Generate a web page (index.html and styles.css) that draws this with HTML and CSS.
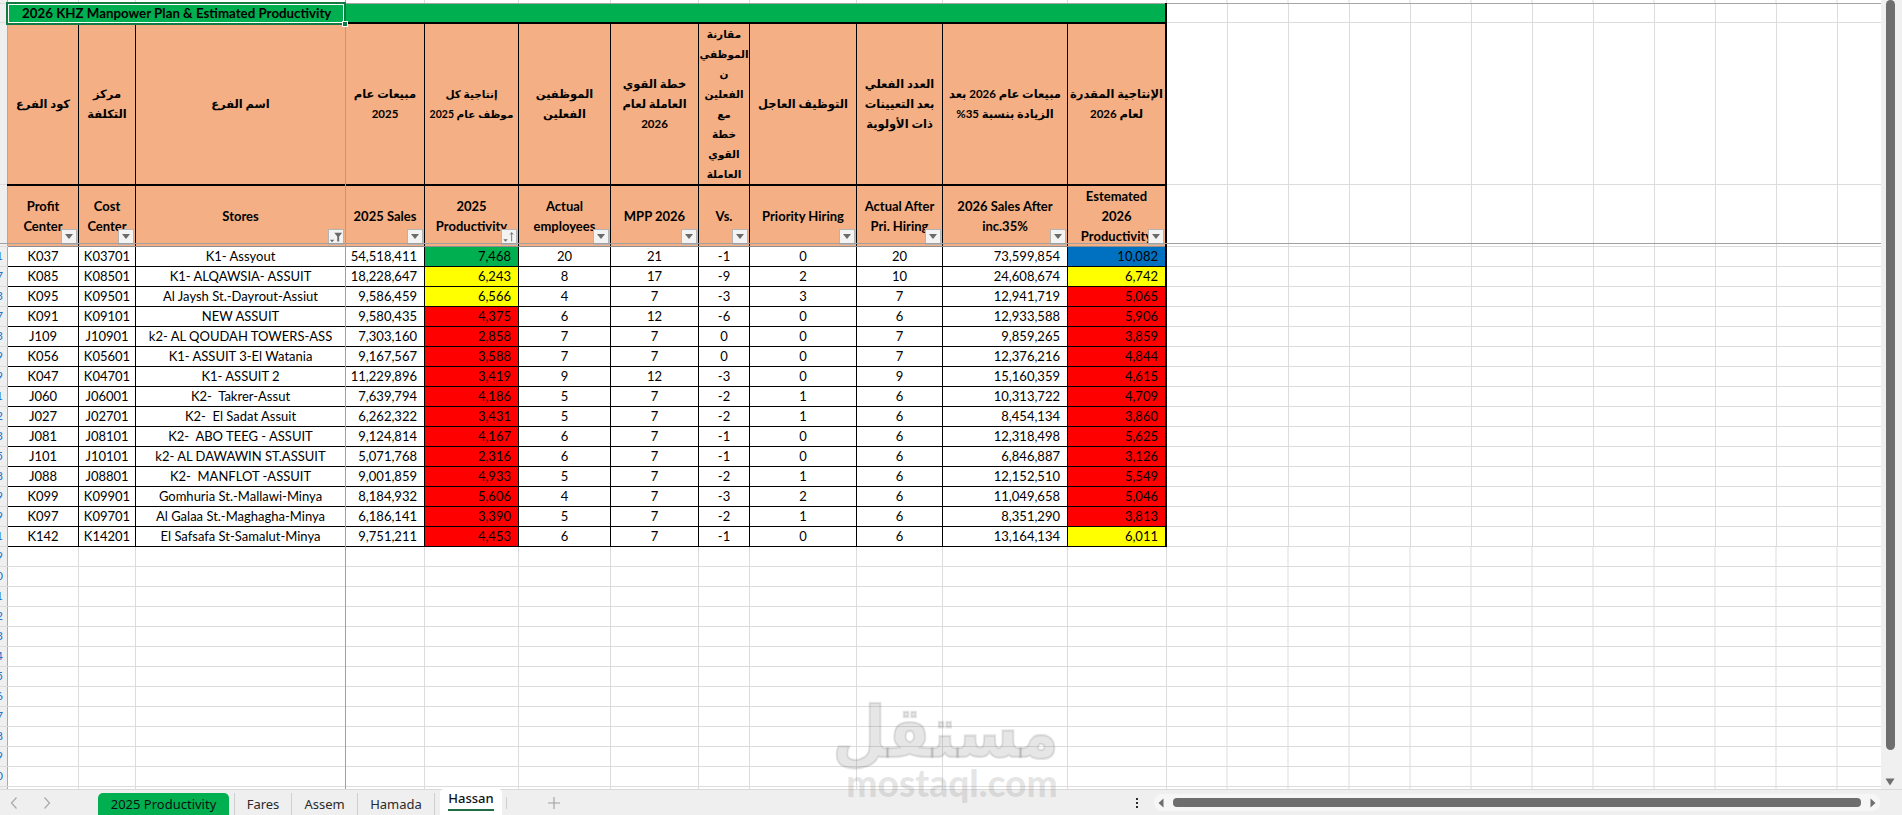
FILE: index.html
```html
<!DOCTYPE html>
<html lang="en">
<head>
<meta charset="utf-8">
<title>2026 KHZ Manpower Plan</title>
<link rel="stylesheet" href="styles.css">
</head>
<body>
<div class="app">
  <div class="work">
    <div class="sheet">
      <table class="grid">
        <colgroup>
          <col class="c0"><col class="c1"><col class="c2"><col class="c3"><col class="c4"><col class="c5"><col class="c6"><col class="c7"><col class="c8"><col class="c9"><col class="c10"><col class="c11"><col class="c12"><col class="c13">
        </colgroup>
        <tbody>
          <tr class="r-top"><th class="rh"></th><td></td><td></td><td></td><td></td><td></td><td></td><td></td><td></td><td></td><td></td><td></td><td></td><td class="rest"></td></tr>
          <tr class="r-title"><th class="rh"></th><th class="title" colspan="3">2026 KHZ Manpower Plan &amp; Estimated Productivity</th><th class="title-fill" colspan="9"></th><td class="rest"></td></tr>
          <tr class="r-ar">
            <th class="rh"></th>
            <th class="ar" dir="rtl">كود الفرع</th>
            <th class="ar" dir="rtl">مركز<br>التكلفة</th>
            <th class="ar" dir="rtl">اسم الفرع</th>
            <th class="ar" dir="rtl">مبيعات عام<br>2025</th>
            <th class="ar tight" dir="rtl">إنتاجية كل<br>موظف عام 2025</th>
            <th class="ar" dir="rtl">الموظفين<br>الفعلين</th>
            <th class="ar" dir="rtl">خطة القوي<br>العاملة لعام<br>2026</th>
            <th class="ar tight" dir="rtl">مقارنة<br>الموظفي<br>ن<br>الفعلين<br>مع<br>خطة<br>القوي<br>العاملة</th>
            <th class="ar" dir="rtl">التوظيف العاجل</th>
            <th class="ar" dir="rtl">العدد الفعلي<br>بعد التعيينات<br>ذات الأولوية</th>
            <th class="ar" dir="rtl">مبيعات عام 2026 بعد<br>الزيادة بنسبة 35%</th>
            <th class="ar end" dir="rtl">الإنتاجية المقدرة<br>لعام 2026</th>
            <td class="rest"></td>
          </tr>
          <tr class="r-en">
            <th class="rh"></th>
            <th class="en">Profit<br>Center<span class="fb"></span></th>
            <th class="en">Cost<br>Center<span class="fb"></span></th>
            <th class="en">Stores<span class="fb fb-icon"><svg viewBox="0 0 16 16" width="14" height="14"><path d="M6 3h9l-3.4 4.4V13H9.4V7.4z" fill="#6a6a6a"/><path d="M1 11h5l-2.5 3z" fill="#6a6a6a"/></svg></span></th>
            <th class="en">2025 Sales<span class="fb"></span></th>
            <th class="en">2025<br>Productivity<span class="fb fb-icon"><svg viewBox="0 0 16 16" width="14" height="14"><path d="M1.500 10.500h5l-2.500 3z" fill="#6a6a6a"/><path d="M11 13V3M9.200 5.200L11 3l1.800 2.200" fill="none" stroke="#6a6a6a" stroke-width="1"/></svg></span></th>
            <th class="en">Actual<br>employees<span class="fb"></span></th>
            <th class="en">MPP 2026<span class="fb"></span></th>
            <th class="en">Vs.<span class="fb"></span></th>
            <th class="en">Priority Hiring<span class="fb"></span></th>
            <th class="en">Actual After<br>Pri. Hiring<span class="fb"></span></th>
            <th class="en">2026 Sales After<br>inc.35%<span class="fb"></span></th>
            <th class="en end">Estemated<br>2026<br>Productivity<span class="fb"></span></th>
            <td class="rest"></td>
          </tr>
          <tr class="d"><th class="rh">61</th><td>K037</td><td>K03701</td><td>K1- Assyout</td><td class="n">54,518,411</td><td class="n green">7,468</td><td>20</td><td>21</td><td>-1</td><td>0</td><td>20</td><td class="n">73,599,854</td><td class="n end blue">10,082</td><td class="rest"></td></tr>
          <tr class="d"><th class="rh">77</th><td>K085</td><td>K08501</td><td>K1- ALQAWSIA- ASSUIT</td><td class="n">18,228,647</td><td class="n yellow">6,243</td><td>8</td><td>17</td><td>-9</td><td>2</td><td>10</td><td class="n">24,608,674</td><td class="n end yellow">6,742</td><td class="rest"></td></tr>
          <tr class="d"><th class="rh">83</th><td>K095</td><td>K09501</td><td>Al Jaysh St.-Dayrout-Assiut</td><td class="n">9,586,459</td><td class="n yellow">6,566</td><td>4</td><td>7</td><td>-3</td><td>3</td><td>7</td><td class="n">12,941,719</td><td class="n end red">5,065</td><td class="rest"></td></tr>
          <tr class="d"><th class="rh">87</th><td>K091</td><td>K09101</td><td>NEW ASSUIT</td><td class="n">9,580,435</td><td class="n red">4,375</td><td>6</td><td>12</td><td>-6</td><td>0</td><td>6</td><td class="n">12,933,588</td><td class="n end red">5,906</td><td class="rest"></td></tr>
          <tr class="d"><th class="rh">93</th><td>J109</td><td>J10901</td><td>k2- AL QOUDAH TOWERS-ASS</td><td class="n">7,303,160</td><td class="n red">2,858</td><td>7</td><td>7</td><td>0</td><td>0</td><td>7</td><td class="n">9,859,265</td><td class="n end red">3,859</td><td class="rest"></td></tr>
          <tr class="d"><th class="rh">99</th><td>K056</td><td>K05601</td><td>K1- ASSUIT 3-El Watania</td><td class="n">9,167,567</td><td class="n red">3,588</td><td>7</td><td>7</td><td>0</td><td>0</td><td>7</td><td class="n">12,376,216</td><td class="n end red">4,844</td><td class="rest"></td></tr>
          <tr class="d"><th class="rh">109</th><td>K047</td><td>K04701</td><td>K1- ASSUIT 2</td><td class="n">11,229,896</td><td class="n red">3,419</td><td>9</td><td>12</td><td>-3</td><td>0</td><td>9</td><td class="n">15,160,359</td><td class="n end red">4,615</td><td class="rest"></td></tr>
          <tr class="d"><th class="rh">111</th><td>J060</td><td>J06001</td><td>K2-&nbsp; Takrer-Assut</td><td class="n">7,639,794</td><td class="n red">4,186</td><td>5</td><td>7</td><td>-2</td><td>1</td><td>6</td><td class="n">10,313,722</td><td class="n end red">4,709</td><td class="rest"></td></tr>
          <tr class="d"><th class="rh">112</th><td>J027</td><td>J02701</td><td>K2-&nbsp; El Sadat Assuit</td><td class="n">6,262,322</td><td class="n red">3,431</td><td>5</td><td>7</td><td>-2</td><td>1</td><td>6</td><td class="n">8,454,134</td><td class="n end red">3,860</td><td class="rest"></td></tr>
          <tr class="d"><th class="rh">113</th><td>J081</td><td>J08101</td><td>K2-&nbsp; ABO TEEG - ASSUIT</td><td class="n">9,124,814</td><td class="n red">4,167</td><td>6</td><td>7</td><td>-1</td><td>0</td><td>6</td><td class="n">12,318,498</td><td class="n end red">5,625</td><td class="rest"></td></tr>
          <tr class="d"><th class="rh">115</th><td>J101</td><td>J10101</td><td>k2- AL DAWAWIN ST.ASSUIT</td><td class="n">5,071,768</td><td class="n red">2,316</td><td>6</td><td>7</td><td>-1</td><td>0</td><td>6</td><td class="n">6,846,887</td><td class="n end red">3,126</td><td class="rest"></td></tr>
          <tr class="d"><th class="rh">118</th><td>J088</td><td>J08801</td><td>K2-&nbsp; MANFLOT -ASSUIT</td><td class="n">9,001,859</td><td class="n red">4,933</td><td>5</td><td>7</td><td>-2</td><td>1</td><td>6</td><td class="n">12,152,510</td><td class="n end red">5,549</td><td class="rest"></td></tr>
          <tr class="d"><th class="rh">119</th><td>K099</td><td>K09901</td><td>Gomhuria St.-Mallawi-Minya</td><td class="n">8,184,932</td><td class="n red">5,606</td><td>4</td><td>7</td><td>-3</td><td>2</td><td>6</td><td class="n">11,049,658</td><td class="n end red">5,046</td><td class="rest"></td></tr>
          <tr class="d"><th class="rh">129</th><td>K097</td><td>K09701</td><td>Al Galaa St.-Maghagha-Minya</td><td class="n">6,186,141</td><td class="n red">3,390</td><td>5</td><td>7</td><td>-2</td><td>1</td><td>6</td><td class="n">8,351,290</td><td class="n end red">3,813</td><td class="rest"></td></tr>
          <tr class="d"><th class="rh">131</th><td>K142</td><td>K14201</td><td>El Safsafa St-Samalut-Minya</td><td class="n">9,751,211</td><td class="n red">4,453</td><td>6</td><td>7</td><td>-1</td><td>0</td><td>6</td><td class="n">13,164,134</td><td class="n end yellow">6,011</td><td class="rest"></td></tr>
          <tr class="e"><th class="rh">139</th><td></td><td></td><td></td><td></td><td></td><td></td><td></td><td></td><td></td><td></td><td></td><td></td><td class="rest"></td></tr>
          <tr class="e"><th class="rh">140</th><td></td><td></td><td></td><td></td><td></td><td></td><td></td><td></td><td></td><td></td><td></td><td></td><td class="rest"></td></tr>
          <tr class="e"><th class="rh">141</th><td></td><td></td><td></td><td></td><td></td><td></td><td></td><td></td><td></td><td></td><td></td><td></td><td class="rest"></td></tr>
          <tr class="e"><th class="rh">142</th><td></td><td></td><td></td><td></td><td></td><td></td><td></td><td></td><td></td><td></td><td></td><td></td><td class="rest"></td></tr>
          <tr class="e"><th class="rh">143</th><td></td><td></td><td></td><td></td><td></td><td></td><td></td><td></td><td></td><td></td><td></td><td></td><td class="rest"></td></tr>
          <tr class="e"><th class="rh">144</th><td></td><td></td><td></td><td></td><td></td><td></td><td></td><td></td><td></td><td></td><td></td><td></td><td class="rest"></td></tr>
          <tr class="e"><th class="rh">145</th><td></td><td></td><td></td><td></td><td></td><td></td><td></td><td></td><td></td><td></td><td></td><td></td><td class="rest"></td></tr>
          <tr class="e"><th class="rh">146</th><td></td><td></td><td></td><td></td><td></td><td></td><td></td><td></td><td></td><td></td><td></td><td></td><td class="rest"></td></tr>
          <tr class="e"><th class="rh">147</th><td></td><td></td><td></td><td></td><td></td><td></td><td></td><td></td><td></td><td></td><td></td><td></td><td class="rest"></td></tr>
          <tr class="e"><th class="rh">148</th><td></td><td></td><td></td><td></td><td></td><td></td><td></td><td></td><td></td><td></td><td></td><td></td><td class="rest"></td></tr>
          <tr class="e"><th class="rh">149</th><td></td><td></td><td></td><td></td><td></td><td></td><td></td><td></td><td></td><td></td><td></td><td></td><td class="rest"></td></tr>
          <tr class="e"><th class="rh">150</th><td></td><td></td><td></td><td></td><td></td><td></td><td></td><td></td><td></td><td></td><td></td><td></td><td class="rest"></td></tr>
          <tr class="e"><th class="rh">151</th><td></td><td></td><td></td><td></td><td></td><td></td><td></td><td></td><td></td><td></td><td></td><td></td><td class="rest"></td></tr>
        </tbody>
      </table>
      <div class="freeze-v"></div>
      <div class="freeze-h"></div>
      <div class="selection"><span class="handle"></span></div>
    </div>
    <div class="vbar">
      <div class="vthumb"></div>
      <svg class="varrow" viewBox="0 0 10 8" width="10" height="8"><path d="M0.500 0.500h9L5 7.500z" fill="#6e6e6e"/></svg>
    </div>
  </div>
  <div class="tabbar">
    <div class="nav">
      <svg viewBox="0 0 8 14" width="8" height="14"><path d="M6.500 1.500L1.500 7l5 5.500" fill="none" stroke="#a8a8a8" stroke-width="1.200"/></svg>
      <svg viewBox="0 0 8 14" width="8" height="14"><path d="M1.500 1.500L6.500 7l-5 5.500" fill="none" stroke="#a8a8a8" stroke-width="1.200"/></svg>
    </div>
    <div class="tab tab-green">2025 Productivity</div>
    <div class="tab tab-fares">Fares</div>
    <div class="tab tab-assem">Assem</div>
    <div class="tab tab-hamada">Hamada</div>
    <div class="tab tab-active"><span class="tab-label">Hassan</span></div>
    <div class="add">
      <svg viewBox="0 0 12 12" width="12" height="12"><path d="M6 0v12M0 6h12" stroke="#a0a0a0" stroke-width="1.100"/></svg>
    </div>
    <div class="dots"><i></i><i></i><i></i></div>
    <div class="hbar">
      <svg viewBox="0 0 6 10" width="6" height="10"><path d="M5.500 0.500v9L0.500 5z" fill="#6e6e6e"/></svg>
      <div class="hthumb"></div>
      <svg viewBox="0 0 6 10" width="6" height="10"><path d="M0.500 0.500v9L5.500 5z" fill="#6e6e6e"/></svg>
    </div>
  </div>
  <div class="watermark">
    <div class="wm-ar" dir="rtl" lang="ar">مستقل</div>
    <div class="wm-en">mostaql.com</div>
  </div>
</div>
</body>
</html>
```

FILE: styles.css
```css
* { box-sizing: border-box; }
html, body { margin: 0; height: 100%; overflow: hidden; background: #fff; }
body { font-family: Lato, "DejaVu Sans", sans-serif; color: #000; }

.app { position: relative; display: flex; flex-direction: column; width: 1902px; height: 815px; overflow: hidden; }
.work { display: flex; height: 789px; }

.sheet { position: relative; width: 1881px; height: 789px; overflow: hidden; background: #fff; }

.grid { border-collapse: collapse; table-layout: fixed; width: 1880.5px; font-size: 13px; line-height: 16px; }
.c0 { width: 7.5px; } .c1 { width: 71px; } .c2 { width: 57px; } .c3 { width: 210px; }
.c4 { width: 79px; } .c5 { width: 94px; } .c6 { width: 92px; } .c7 { width: 88px; }
.c8 { width: 51px; } .c9 { width: 107px; } .c10 { width: 86px; } .c11 { width: 125px; }
.c12 { width: 98.500px; } .c13 { width: 714.500px; }

.grid td, .grid th { padding: 0; border-right: 1px solid #dcdcdc; border-bottom: 1px solid #dcdcdc; text-align: center; white-space: nowrap; overflow: hidden; font-weight: 400; }

.r-top { height: 3px; }
.r-top td, .r-top th { border-bottom-color: #a6a6a6; line-height: 0; font-size: 0; }
.r-title { height: 19.500px; }
.r-ar { height: 160px; }
.r-en { height: 58.500px; }
.d { height: 20px; }
.e { height: 20px; }

.grid .rh { padding-right: 4px; background: #efefef; border-right: 1px solid #ababab; border-bottom-color: #dcdcdc; direction: rtl; text-align: right; color: #2a6fc9; font-size: 12px; }

.rest.rest { background: repeating-linear-gradient(to right, transparent 0, transparent 60px, #dcdcdc 60px, #dcdcdc 61px); }

.grid .title { background: #00b050; font-weight: 700; font-size: 13.300px; border-bottom: 2px solid #000; border-right: 0; }
.grid .title-fill { background: #00b050; border-bottom: 2px solid #000; border-right: 2px solid #000; }

.grid .ar, .grid .en { background: #f4b084; font-weight: 700; line-height: 20px; border-right: 1px solid #000; }
.grid .ar { border-bottom: 2px solid #000; font-size: 11.500px; }
.grid .tight { font-size: 10.500px; }
.grid .en { position: relative; border-bottom: 1px solid #8f8f8f; }

.d td { border-right-color: #000; border-bottom-color: #000; }
.grid td.rest { border-right: 0; }
.d td.rest { border-bottom-color: #dcdcdc; }
.grid .end { border-right: 2px solid #000; }

.grid .n { text-align: right; padding-right: 7px; }
.grid .green { background: #00b050; }
.grid .yellow { background: #ffff00; }
.grid .red { background: #ff0000; }
.grid .blue { background: #0070c0; }

.fb { position: absolute; right: 1px; bottom: 1px; display: flex; align-items: center; justify-content: center; width: 16px; height: 16px; background: #f3f3f3; border: 1px solid #b4b4b4; }
.fb::after { content: ""; border-left: 4px solid transparent; border-right: 4px solid transparent; border-top: 5px solid #6a6a6a; }
.fb-icon::after { display: none; }

.freeze-v { position: absolute; left: 345px; top: 0; bottom: 0; width: 1px; background: #a0a0a0; }
.freeze-h { position: absolute; left: 0; right: 0; top: 243px; height: 1px; background: #a0a0a0; }
.selection { position: absolute; left: 6px; top: 2px; width: 340px; height: 23px; border: 2px solid #107c41; box-shadow: inset 0 0 0 1px #fff; }
.handle { position: absolute; right: -4px; bottom: -4px; width: 6px; height: 6px; background: #107c41; border: 1px solid #fff; }

.vbar { position: relative; display: flex; flex-direction: column; align-items: center; width: 21px; height: 789px; background: #f0f0f0; }
.vthumb { width: 9px; height: 750px; margin-right: 3px; background: #6e6e6e; border-radius: 5px; }
.varrow { margin-top: 28px; margin-right: 3px; }

.tabbar { display: flex; align-items: flex-end; height: 26px; background: #efefef; border-top: 1px solid #d9d9d9; font-family: "Noto Sans", sans-serif; font-size: 13px; color: #2b2b2b; }
.tabbar > * { flex-shrink: 0; }
.nav { display: flex; align-self: center; gap: 25px; width: 98px; padding-left: 10px; }
.tab { display: flex; align-items: center; justify-content: center; height: 22px; border-right: 1px solid #d0d0d0; }
.tab-green { width: 131px; margin-right: 5px; background: #00b050; border: 0; border-radius: 5px 5px 0 0; color: #111; }
.tab-fares { width: 58px; border-left: 1px solid #d0d0d0; }
.tab-assem { width: 66px; }
.tab-hamada { width: 77px; }
.tab-active { width: 62px; height: 26px; margin-left: 5px; background: #fff; border: 0; border-radius: 4px 4px 0 0; font-weight: 500; align-items: stretch; }
.tab-label { display: flex; align-items: center; height: 25px; margin-top: -3px; padding-top: 1px; border-bottom: 2px solid #1e6c41; color: #111; }
.add { display: flex; align-self: center; justify-content: center; width: 94px; margin-left: 4px; border-left: 1px solid #d0d0d0; }
.dots { display: flex; flex-direction: column; align-self: center; gap: 2px; margin-left: 536px; }
.dots i { display: block; width: 2px; height: 2px; background: #2b2b2b; }
.hbar { display: flex; align-items: center; justify-content: space-between; align-self: center; width: 726px; height: 17px; margin-left: 16px; margin-right: 22px; padding: 0 4px; background: #f6f6f6; border-radius: 8px; }
.hthumb { width: 688px; height: 9px; background: #6e6e6e; border-radius: 4px; }

.watermark { position: absolute; left: 845px; top: 703px; width: 214px; color: rgba(120, 120, 120, 0.19); text-align: center; pointer-events: none; }
.wm-ar { height: 60px; font-family: "DejaVu Sans", sans-serif; font-weight: 700; font-size: 62px; line-height: 60px; -webkit-text-stroke: 2px rgba(120, 120, 120, 0.19); transform: scaleY(1.15); }
.wm-en { margin-top: 5px; font-family: Lato, sans-serif; font-weight: 900; font-size: 37px; line-height: 30px; }
```
